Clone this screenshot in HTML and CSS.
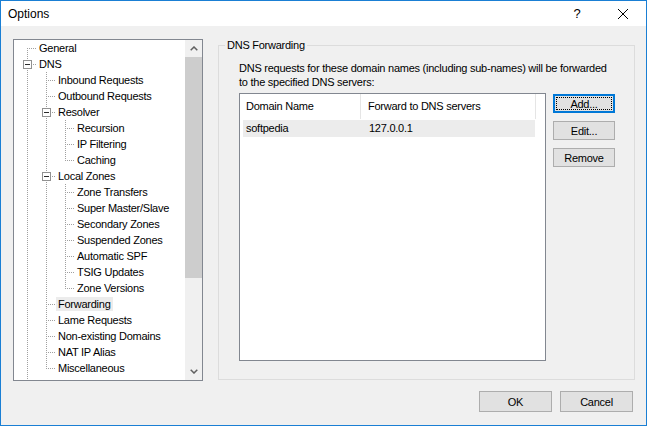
FILE: index.html
```html
<!DOCTYPE html>
<html lang="en">
<head>
    <meta charset="UTF-8">
    <title>Options</title>
    <link rel="stylesheet" href="styles.css">
</head>
<body>
    <div class="window">
        <div class="titlebar">
            <span class="title">Options</span>
            <span class="caption-btn help">?</span>
            <span class="caption-btn close">
                <svg width="10" height="10" viewBox="0 0 10 10"><path d="M0 0L10 10M10 0L0 10" stroke="#000" stroke-width="1" fill="none"/></svg>
            </span>
        </div>

        <div class="client">
            <div class="panes">
                <div class="tree-box">
                    <ul class="tree">
                        <li class="row"><span class="c first"></span><span class="label">General</span></li>
                        <li class="row"><span class="c tee"><span class="exp"></span></span><span class="label">DNS</span></li>
                        <li class="row"><span class="g pipe"></span><span class="c tee"></span><span class="label">Inbound Requests</span></li>
                        <li class="row"><span class="g pipe"></span><span class="c tee"></span><span class="label">Outbound Requests</span></li>
                        <li class="row"><span class="g pipe"></span><span class="c tee"><span class="exp"></span></span><span class="label">Resolver</span></li>
                        <li class="row"><span class="g pipe"></span><span class="g pipe"></span><span class="c tee"></span><span class="label">Recursion</span></li>
                        <li class="row"><span class="g pipe"></span><span class="g pipe"></span><span class="c tee"></span><span class="label">IP Filtering</span></li>
                        <li class="row"><span class="g pipe"></span><span class="g pipe"></span><span class="c elbow"></span><span class="label">Caching</span></li>
                        <li class="row"><span class="g pipe"></span><span class="c tee"><span class="exp"></span></span><span class="label">Local Zones</span></li>
                        <li class="row"><span class="g pipe"></span><span class="g pipe"></span><span class="c tee"></span><span class="label">Zone Transfers</span></li>
                        <li class="row"><span class="g pipe"></span><span class="g pipe"></span><span class="c tee"></span><span class="label">Super Master/Slave</span></li>
                        <li class="row"><span class="g pipe"></span><span class="g pipe"></span><span class="c tee"></span><span class="label">Secondary Zones</span></li>
                        <li class="row"><span class="g pipe"></span><span class="g pipe"></span><span class="c tee"></span><span class="label">Suspended Zones</span></li>
                        <li class="row"><span class="g pipe"></span><span class="g pipe"></span><span class="c tee"></span><span class="label">Automatic SPF</span></li>
                        <li class="row"><span class="g pipe"></span><span class="g pipe"></span><span class="c tee"></span><span class="label">TSIG Updates</span></li>
                        <li class="row"><span class="g pipe"></span><span class="g pipe"></span><span class="c elbow"></span><span class="label">Zone Versions</span></li>
                        <li class="row"><span class="g pipe"></span><span class="c tee"></span><span class="label selected">Forwarding</span></li>
                        <li class="row"><span class="g pipe"></span><span class="c tee"></span><span class="label">Lame Requests</span></li>
                        <li class="row"><span class="g pipe"></span><span class="c tee"></span><span class="label">Non-existing Domains</span></li>
                        <li class="row"><span class="g pipe"></span><span class="c tee"></span><span class="label">NAT IP Alias</span></li>
                        <li class="row"><span class="g pipe"></span><span class="c elbow"></span><span class="label">Miscellaneous</span></li>
                        <li class="row"><span class="g pipe"></span></li>
                    </ul>
                    <div class="vscroll">
                        <div class="sb-arrow">
                            <svg width="8" height="5" viewBox="0 0 8 5"><path d="M0.7 4.3L4 1L7.3 4.3" fill="none" stroke="#606060" stroke-width="1.5"/></svg>
                        </div>
                        <div class="sb-track"><div class="sb-thumb"></div></div>
                        <div class="sb-arrow">
                            <svg width="8" height="5" viewBox="0 0 8 5"><path d="M0.7 0.7L4 4L7.3 0.7" fill="none" stroke="#606060" stroke-width="1.5"/></svg>
                        </div>
                    </div>
                </div>

                <div class="group">
                    <span class="group-title">DNS Forwarding</span>
                    <p class="desc">DNS requests for these domain names (including sub-names) will be forwarded<br>to the specified DNS servers:</p>
                    <div class="group-body">
                        <div class="listview">
                            <div class="lv-header">
                                <span class="hd hd-domain">Domain Name</span>
                                <span class="hd hd-fwd">Forward to DNS servers</span>
                            </div>
                            <div class="lv-row selected">
                                <span class="cell cell-domain">softpedia</span>
                                <span class="cell cell-fwd">127.0.0.1</span>
                            </div>
                        </div>
                        <div class="side-buttons">
                            <button class="btn default">Add...</button>
                            <button class="btn">Edit...</button>
                            <button class="btn">Remove</button>
                        </div>
                    </div>
                </div>
            </div>

            <div class="footer">
                <button class="btn wide">OK</button>
                <button class="btn wide">Cancel</button>
            </div>
        </div>
    </div>
</body>
</html>
```

FILE: styles.css
```css
:root {
    --dot-v: repeating-linear-gradient(to bottom, #a0a0a0 0 1px, transparent 1px 2px);
    --dot-h: repeating-linear-gradient(to right, #a0a0a0 0 1px, transparent 1px 2px);
}
* {
    box-sizing: border-box;
}
html, body {
    margin: 0;
    padding: 0;
}
body {
    font-family: "Liberation Sans", Arial, sans-serif;
    font-size: 11px;
    letter-spacing: -0.25px;
    color: #000;
    background: #f0f0f0;
}
.window {
    width: 647px;
    height: 426px;
    border: 1px solid #1a7fd4;
    background: #f0f0f0;
    display: flex;
    flex-direction: column;
}

/* title bar */
.titlebar {
    height: 25px;
    flex: none;
    background: #fff;
    display: flex;
    align-items: center;
    letter-spacing: 0;
}
.title {
    flex: 1;
    font-size: 12px;
    padding-left: 7px;
}
.caption-btn {
    width: 46px;
    height: 25px;
    display: flex;
    align-items: center;
    justify-content: center;
}
.help {
    font-size: 13px;
}

/* client area */
.client {
    flex: 1;
    padding: 13px 11px 0 12px;
    display: flex;
    flex-direction: column;
}
.panes {
    display: flex;
    gap: 15px;
    align-items: flex-start;
}

/* tree view */
.tree-box {
    width: 190px;
    height: 342px;
    border: 1px solid #828790;
    background: #fff;
    display: flex;
}
.tree {
    flex: 1;
    list-style: none;
    margin: 0;
    padding: 0;
    overflow: hidden;
}
.row {
    display: flex;
    height: 16px;
}
.g {
    flex: none;
    width: 19px;
    height: 16px;
}
.g.pipe {
    background: var(--dot-v) 13px 0 / 1px 16px no-repeat;
}
.c {
    flex: none;
    width: 23px;
    height: 16px;
    display: flex;
    align-items: center;
    padding-left: 9px;
}
.c.tee {
    background: var(--dot-v) 13px 0 / 1px 16px no-repeat,
                var(--dot-h) 15px 8px / 8px 1px no-repeat;
}
.c.elbow {
    background: var(--dot-v) 13px 0 / 1px 9px no-repeat,
                var(--dot-h) 15px 8px / 8px 1px no-repeat;
}
.c.first {
    background: var(--dot-v) 13px 8px / 1px 8px no-repeat,
                var(--dot-h) 15px 8px / 8px 1px no-repeat;
}
.exp {
    width: 9px;
    height: 9px;
    border: 1px solid #919191;
    background: #fff;
    display: flex;
    align-items: center;
    justify-content: center;
}
.exp::before {
    content: "";
    width: 5px;
    height: 1px;
    background: #2b2b2b;
}
.label {
    padding: 0 2px;
    margin: 1px 0;
    line-height: 14px;
    white-space: nowrap;
}
.label.selected {
    background: #ececec;
}

/* scrollbar */
.vscroll {
    width: 17px;
    flex: none;
    background: #f0f0f0;
    display: flex;
    flex-direction: column;
}
.sb-arrow {
    height: 17px;
    flex: none;
    display: flex;
    align-items: center;
    justify-content: center;
}
.sb-track {
    flex: 1;
}
.sb-thumb {
    height: 221px;
    background: #cdcdcd;
}

/* group box */
.group {
    width: 417px;
    height: 335px;
    margin-top: 6px;
    border: 1px solid #dcdcdc;
    padding: 0 0 0 20px;
    display: flex;
    flex-direction: column;
}
.group-title {
    align-self: flex-start;
    margin: -7px 0 0 -14px;
    padding: 0 2px;
    line-height: 13px;
    background: #f0f0f0;
}
.desc {
    margin: 9px 0 4px;
    line-height: 14px;
    white-space: nowrap;
}
.group-body {
    display: flex;
    gap: 7px;
    align-items: flex-start;
}

/* list view */
.listview {
    width: 307px;
    height: 268px;
    border: 1px solid #828790;
    background: #fff;
}
.lv-header {
    display: flex;
    height: 25px;
}
.hd {
    line-height: 25px;
    border-right: 1px solid #e5e5e5;
    white-space: nowrap;
}
.hd-domain {
    width: 121px;
    padding-left: 6px;
}
.hd-fwd {
    width: 175px;
    padding-left: 7px;
}
.lv-row {
    display: flex;
    width: 292px;
    height: 17px;
    margin: 1px 0 0 3px;
    line-height: 17px;
}
.lv-row.selected {
    background: #ececec;
}
.cell-domain {
    width: 118px;
    padding-left: 3px;
}
.cell-fwd {
    padding-left: 8px;
}

/* buttons */
.side-buttons {
    display: flex;
    flex-direction: column;
    gap: 8px;
    padding-top: 1px;
}
.btn {
    width: 62px;
    height: 19px;
    padding: 0;
    margin: 0;
    font-family: inherit;
    font-size: 11px;
    letter-spacing: inherit;
    color: #000;
    background: #e1e1e1;
    border: 1px solid #adadad;
    border-radius: 0;
}
.btn.default {
    border-color: #0078d7;
    box-shadow: inset 0 0 0 1px #0078d7;
    outline: 1px dotted #000;
    outline-offset: -4px;
}
.footer {
    display: flex;
    justify-content: flex-end;
    gap: 8px;
    margin-top: 10px;
    padding-right: 2px;
}
.btn.wide {
    width: 73px;
    height: 21px;
}
```
